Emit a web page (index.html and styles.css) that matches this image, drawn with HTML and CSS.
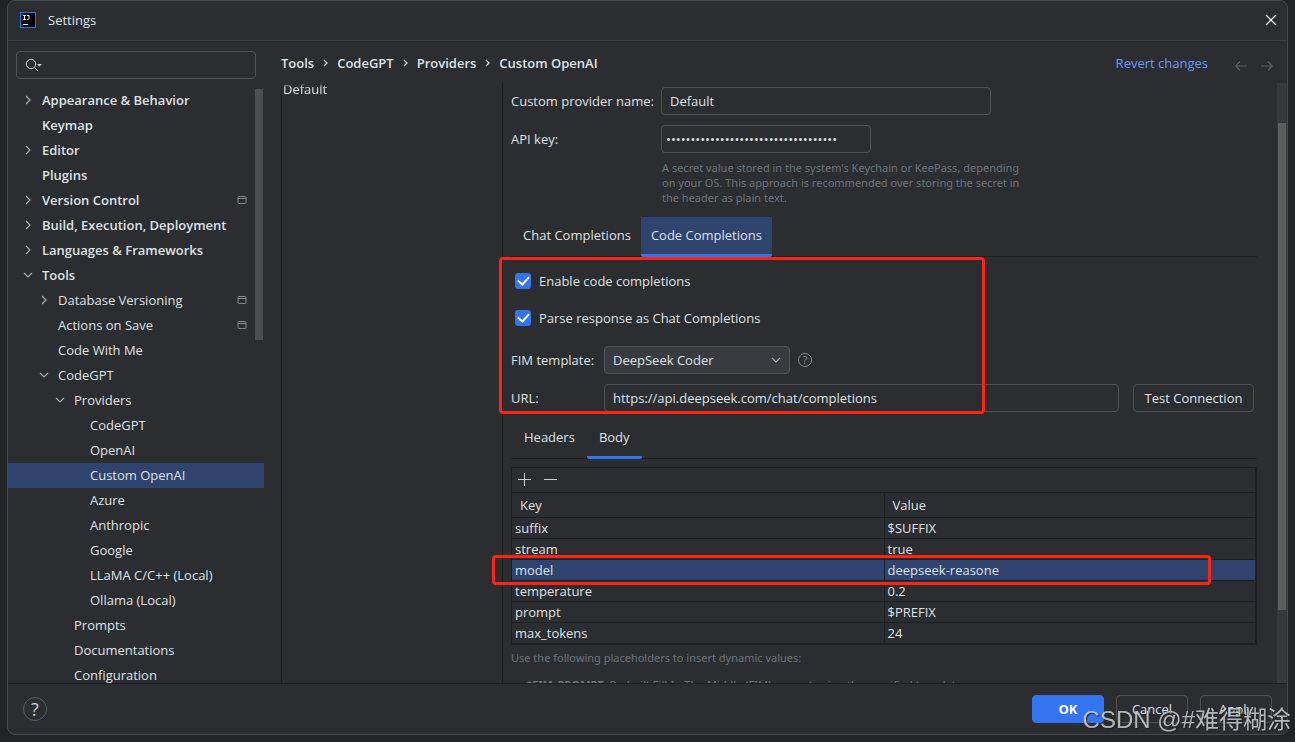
FILE: index.html
```html
<!DOCTYPE html>
<html lang="en">
<head>
<meta charset="utf-8">
<title>Settings</title>
<link rel="stylesheet" href="styles.css">
</head>
<body>
<svg class="defs" aria-hidden="true">
  <symbol id="right" viewBox="0 0 16 16"><path d="M6 4l4 4-4 4" fill="none" stroke="currentColor" stroke-width="1.2"/></symbol>
  <symbol id="down" viewBox="0 0 16 16"><path d="M4 6l4 4 4-4" fill="none" stroke="currentColor" stroke-width="1.2"/></symbol>
  <symbol id="project" viewBox="0 0 10 10"><path d="M1 3.5h8M2 1.500h6a1 1 0 0 1 1 1v5a1 1 0 0 1-1 1H2a1 1 0 0 1-1-1v-5a1 1 0 0 1 1-1z" fill="none" stroke="currentColor"/></symbol>
</svg>
<div class="dialog">
  <header class="titlebar">
    <svg class="logo" viewBox="0 0 16 16" aria-hidden="true"><rect x=".5" y=".5" width="15" height="15" fill="#000" stroke="#087cfa"/><path d="M3 3.500h3M4.500 3.500v4M3 7.500h3M7 3.500h2v3.200q0 .8-.8.8H7M3 12.500h5" fill="none" stroke="#fff"/></svg>
    <span class="title">Settings</span>
    <button class="icon-button close" aria-label="Close"><svg viewBox="0 0 12 12"><path d="M1 1l10 10M11 1L1 11" stroke="currentColor" stroke-width="1.200"/></svg></button>
  </header>

  <div class="content">
    <aside class="sidebar">
      <label class="search">
        <svg viewBox="0 0 18 14" aria-hidden="true"><circle cx="6" cy="6" r="4.700" fill="none" stroke="currentColor"/><path d="M9.400 9.400L13 13" stroke="currentColor"/><path d="M12 6h5l-2.500 2.500z" fill="currentColor"/></svg>
        <input type="text" aria-label="Search settings">
      </label>
      <nav class="tree-view" aria-label="Settings categories">
        <ul class="tree">
          <li><button class="node top"><svg class="arrow"><use href="#right"/></svg>Appearance &amp; Behavior</button></li>
          <li><button class="node top"><span class="arrow"></span>Keymap</button></li>
          <li><button class="node top"><svg class="arrow"><use href="#right"/></svg>Editor</button></li>
          <li><button class="node top"><span class="arrow"></span>Plugins</button></li>
          <li><button class="node top"><svg class="arrow"><use href="#right"/></svg>Version Control<svg class="mark"><use href="#project"/></svg></button></li>
          <li><button class="node top"><svg class="arrow"><use href="#right"/></svg>Build, Execution, Deployment</button></li>
          <li><button class="node top"><svg class="arrow"><use href="#right"/></svg>Languages &amp; Frameworks</button></li>
          <li><button class="node top" aria-expanded="true"><svg class="arrow"><use href="#down"/></svg>Tools</button>
            <ul>
              <li><button class="node level-1"><svg class="arrow"><use href="#right"/></svg>Database Versioning<svg class="mark"><use href="#project"/></svg></button></li>
              <li><button class="node level-1"><span class="arrow"></span>Actions on Save<svg class="mark"><use href="#project"/></svg></button></li>
              <li><button class="node level-1"><span class="arrow"></span>Code With Me</button></li>
              <li><button class="node level-1" aria-expanded="true"><svg class="arrow"><use href="#down"/></svg>CodeGPT</button>
                <ul>
                  <li><button class="node level-2" aria-expanded="true"><svg class="arrow"><use href="#down"/></svg>Providers</button>
                    <ul>
                      <li><button class="node level-3"><span class="arrow"></span>CodeGPT</button></li>
                      <li><button class="node level-3"><span class="arrow"></span>OpenAI</button></li>
                      <li><button class="node level-3 selected" aria-current="page"><span class="arrow"></span>Custom OpenAI</button></li>
                      <li><button class="node level-3"><span class="arrow"></span>Azure</button></li>
                      <li><button class="node level-3"><span class="arrow"></span>Anthropic</button></li>
                      <li><button class="node level-3"><span class="arrow"></span>Google</button></li>
                      <li><button class="node level-3"><span class="arrow"></span>LLaMA C/C++ (Local)</button></li>
                      <li><button class="node level-3"><span class="arrow"></span>Ollama (Local)</button></li>
                    </ul>
                  </li>
                  <li><button class="node level-2"><span class="arrow"></span>Prompts</button></li>
                  <li><button class="node level-2"><span class="arrow"></span>Documentations</button></li>
                  <li><button class="node level-2"><span class="arrow"></span>Configuration</button></li>
                </ul>
              </li>
            </ul>
          </li>
        </ul>
        <div class="tree-thumb"></div>
      </nav>
    </aside>

    <main class="main">
      <div class="path-row">
        <nav class="path" aria-label="Breadcrumb">
          <span>Tools</span><svg><path d="M1 1l3 3-3 3" fill="none" stroke="currentColor" stroke-width="1.200"/></svg>
          <span>CodeGPT</span><svg><path d="M1 1l3 3-3 3" fill="none" stroke="currentColor" stroke-width="1.200"/></svg>
          <span>Providers</span><svg><path d="M1 1l3 3-3 3" fill="none" stroke="currentColor" stroke-width="1.200"/></svg>
          <span>Custom OpenAI</span>
        </nav>
        <a class="revert" href="#">Revert changes</a>
        <div class="history">
          <button class="icon-button" aria-label="Back" disabled><svg viewBox="0 0 12 12"><path d="M12 6H1M5 1.500L.8 6 5 10.500" fill="none" stroke="currentColor" stroke-width="1.200"/></svg></button>
          <button class="icon-button" aria-label="Forward" disabled><svg viewBox="0 0 12 12"><path d="M0 6h11M7 1.500L11.200 6 7 10.500" fill="none" stroke="currentColor" stroke-width="1.200"/></svg></button>
        </div>
      </div>

      <div class="panes">
        <ul class="providers"><li>Default</li></ul>
        <section class="detail">
          <div class="form">
            <label for="name">Custom provider name:</label>
            <input class="field name" id="name" type="text" value="Default">
            <label for="key">API key:</label>
            <input class="field key" id="key" type="password" value="abcdefghijklmnopqrstuvwxyz012345678">
          </div>
          <p class="hint key-hint">A secret value stored in the system's Keychain or KeePass, depending<br>on your OS. This approach is recommended over storing the secret in<br>the header as plain text.</p>

          <div class="tabs" role="tablist">
            <button class="tab" role="tab" aria-selected="false">Chat Completions</button>
            <button class="tab active filled" role="tab" aria-selected="true">Code Completions</button>
          </div>

          <div class="checks">
            <label class="check"><input type="checkbox" checked>Enable code completions</label>
            <label class="check"><input type="checkbox" checked>Parse response as Chat Completions</label>
          </div>

          <div class="line">
            <label class="line-label" for="fim">FIM template:</label>
            <span class="combo"><select id="fim"><option>DeepSeek Coder</option></select><svg><use href="#down"/></svg></span>
            <button class="help small" aria-label="Template help">?</button>
          </div>
          <div class="line url-line">
            <label class="line-label" for="url">URL:</label>
            <input class="field url" id="url" type="text" value="https://api.deepseek.com/chat/completions">
            <button class="button test">Test Connection</button>
          </div>

          <div class="tabs sub" role="tablist">
            <button class="tab" role="tab" aria-selected="false">Headers</button>
            <button class="tab active" role="tab" aria-selected="true">Body</button>
          </div>

          <div class="grid">
            <div class="toolbar">
              <button class="icon-button" aria-label="Add"><svg viewBox="0 0 14 14"><path d="M7.500 1v13M1 7.500h13" stroke="currentColor"/></svg></button>
              <button class="icon-button" aria-label="Remove"><svg viewBox="0 0 14 14"><path d="M1 7.500h13" stroke="currentColor"/></svg></button>
            </div>
            <table>
              <thead><tr><th>Key</th><th>Value</th></tr></thead>
              <tbody>
                <tr><td>suffix</td><td>$SUFFIX</td></tr>
                <tr><td>stream</td><td>true</td></tr>
                <tr class="selected"><td>model</td><td>deepseek-reasone</td></tr>
                <tr><td>temperature</td><td>0.2</td></tr>
                <tr><td>prompt</td><td>$PREFIX</td></tr>
                <tr><td>max_tokens</td><td>24</td></tr>
              </tbody>
            </table>
          </div>
          <p class="hint">Use the following placeholders to insert dynamic values:</p>
          <ul class="hint placeholders"><li><b>$FIM_PROMPT</b>: Prebuilt Fill-In-The-Middle (FIM) prompt using the specified template.</li></ul>
        </section>
        <div class="scrollbar"><div class="thumb"></div></div>
      </div>
    </main>
  </div>

  <footer class="footer">
    <button class="help" aria-label="Help">?</button>
    <div class="actions">
      <button class="button primary">OK</button>
      <button class="button">Cancel</button>
      <button class="button">Apply</button>
    </div>
  </footer>
</div>
<div class="callout callout-options"></div>
<div class="callout callout-model"></div>
<div class="watermark">CSDN @#难得糊涂</div>
</body>
</html>
```
FILE: styles.css
```css
* { box-sizing: border-box; }

body {
  margin: 0;
  height: 100vh;
  overflow: hidden;
  padding: 0 7px 7px;
  background: #222326;
  color: #dfe1e5;
  font: 13px/18px "Open Sans", "Noto Sans", sans-serif;
}

button, input, select { font: inherit; color: inherit; }
button { background: none; border: 0; padding: 0; }
ul { list-style: none; margin: 0; padding: 0; }
p { margin: 0; }
svg { display: block; flex: none; }
.defs { display: none; }

.dialog {
  display: flex;
  flex-direction: column;
  height: 100%;
  border: 1px solid #47494c;
  border-radius: 8px;
  background: #2b2d30;
  overflow: hidden;
}

.titlebar {
  display: flex;
  align-items: center;
  height: 40px;
  flex: none;
  padding: 0 10px 2px 12px;
  border-bottom: 1px solid #3c3e41;
}
.logo { width: 16px; height: 16px; }
.title { margin-left: 12px; }
.close { margin-left: auto; color: #fff; }
.icon-button svg { width: 12px; height: 12px; }

.content { display: flex; flex: 1; min-height: 0; }

.sidebar { width: 256px; flex: none; display: flex; flex-direction: column; }
.search {
  display: flex;
  align-items: center;
  flex: none;
  height: 28px;
  margin: 10px 8px 9px;
  padding-left: 8px;
  border: 1px solid #4e5157;
  border-radius: 4px;
  color: #ced0d6;
}
.search svg { width: 18px; height: 14px; }
.search input { flex: 1; min-width: 0; border: 0; outline: 0; background: none; }

.tree-view { position: relative; flex: 1; min-height: 0; overflow: hidden; }
.node {
  display: flex;
  align-items: center;
  width: 100%;
  height: 25px;
  padding: 0 0 1px 12px;
  text-align: left;
}
.top { font-weight: 600; }
.level-1 { padding-left: 28px; }
.level-2 { padding-left: 44px; }
.level-3 { padding-left: 60px; }
.node.selected { background: #2e436e; }
.arrow { width: 16px; height: 16px; margin-right: 6px; flex: none; color: #a8abb2; }
.mark { width: 10px; height: 10px; margin-left: auto; margin-right: 17px; color: #868a91; }
.tree-thumb {
  position: absolute;
  top: 1px;
  right: 1px;
  width: 8px;
  height: 251px;
  background: #4d4e51;
}

.main { flex: 1; min-width: 0; display: flex; flex-direction: column; padding-left: 17px; }
.path-row { display: flex; align-items: center; height: 42px; flex: none; padding: 2px 14px 0 0; }
.path { display: flex; align-items: center; gap: 9px; font-weight: 600; }
.path svg { width: 5px; height: 8px; }
.revert { margin-left: auto; color: #6b9bfa; text-decoration: none; }
.history { display: flex; gap: 14px; margin-left: 27px; padding-top: 5px; color: #5a5d63; }

.panes { display: flex; flex: 1; min-height: 0; }
.providers {
  width: 221px;
  flex: none;
  overflow: hidden;
  border-left: 1px solid #1e1f22;
  padding-left: 1px;
  line-height: 12px;
  mask-image: linear-gradient(transparent, #000 5px);
}
.detail {
  flex: 1;
  min-width: 0;
  overflow: hidden;
  border-left: 1px solid #1e1f22;
  padding: 4px 20px 0 8px;
}
.scrollbar { width: 10px; flex: none; padding: 40px 1px 0; background: #37383b; }
.thumb { height: 87%; max-height: 487px; background: #5c5d5f; }

.form { display: grid; grid-template-columns: 150px 1fr; gap: 10px 0; align-items: center; }
.field {
  height: 28px;
  border: 1px solid #4e5157;
  border-radius: 4px;
  background: transparent;
  padding: 0 8px 1px;
  outline: 0;
}
.name { width: 330px; }
.key { width: 210px; padding: 0 4px; }
.hint { font-family: "Noto Sans", sans-serif; font-size: 11px; line-height: 15px; color: #6f737a; }
.key-hint { margin: 7px 0 12px 151px; }

.tabs { display: flex; height: 40px; padding-left: 2px; border-bottom: 1px solid #1e1f22; }
.tab { height: 40px; padding: 0 10px 1px; border-bottom: 3px solid transparent; }
.tab.active { border-bottom-color: #3574f0; border-radius: 0 0 2px 2px; }
.tab.filled { background: #2e436e; }
.sub { margin-top: 7px; padding-left: 1px; }
.sub .tab { padding: 0 12px 1px; }

.checks { display: flex; flex-direction: column; gap: 21px; padding: 16px 0 20px 4px; }
.check { display: flex; align-items: center; gap: 8px; height: 16px; }
.check input {
  appearance: none;
  width: 16px;
  height: 16px;
  margin: 0;
  border-radius: 3px;
  background: #3574f0;
  display: grid;
  place-items: center;
}
.check input:checked::after {
  content: "";
  width: 5px;
  height: 9px;
  margin-bottom: 3px;
  border: solid #fff;
  border-width: 0 2px 2px 0;
  transform: rotate(42deg);
}

.line { display: flex; align-items: center; }
.line-label { width: 93px; flex: none; }
.combo { position: relative; display: block; width: 186px; height: 28px; margin-right: 8px; }
.combo select {
  appearance: none;
  width: 100%;
  height: 28px;
  padding: 0 8px;
  border: 1px solid #4e5157;
  border-radius: 4px;
  background: #393b40;
  outline: 0;
}
.combo svg { position: absolute; right: 6px; top: 6px; width: 16px; height: 16px; color: #a8abb2; pointer-events: none; }
.help {
  width: 24px;
  height: 24px;
  border: 1px solid #5a5d63;
  border-radius: 50%;
  font-size: 18px;
  line-height: 22px;
  color: #ced0d6;
}
.help.small { width: 14px; height: 14px; font-size: 11px; line-height: 12px; color: #868a91; border-color: #868a91; }
.url-line { margin-top: 10px; padding-right: 3px; }
.url { flex: 1; min-width: 0; }
.button {
  height: 28px;
  width: 72px;
  border: 1px solid #4e5157;
  border-radius: 4px;
}
.test { width: 121px; margin-left: 14px; }
.primary { background: #3574f0; border-color: #3574f0; font-weight: 700; color: #fff; }

.grid { margin: 8px 0 5px; border: 1px solid #1e1f22; border-width: 1px 2px 2px 1px; }
.toolbar { display: flex; align-items: center; gap: 12px; height: 24px; padding: 0 0 2px 5px; color: #ced0d6; }
.toolbar svg { width: 14px; height: 14px; }
table { width: 100%; border-collapse: separate; border-spacing: 0; table-layout: fixed; }
th {
  height: 26px;
  padding: 0 8px;
  border-top: 1px solid #1e1f22;
  border-bottom: 1px solid #1e1f22;
  text-align: left;
  font-weight: 400;
}
td { height: 21px; padding: 0 3px; border-bottom: 1px solid #1e1f22; }
tbody tr:last-child td { height: 20px; border-bottom: 0; }
th + th, td + td { border-left: 1px solid #1e1f22; }
tr.selected { background: #2e436e; }
.placeholders { margin-top: 12px; padding-left: 15px; white-space: nowrap; }

.footer {
  display: flex;
  align-items: center;
  justify-content: space-between;
  height: 51px;
  flex: none;
  padding: 0 15px;
  border-top: 1px solid #1e1f22;
}
.actions { display: flex; gap: 12px; }

/* Annotations drawn over the dialog */
.callout { position: absolute; border: 3px solid #fb2416; border-radius: 4px; pointer-events: none; }
.callout-options { left: 499px; top: 257px; width: 486px; height: 157px; }
.callout-model { left: 492px; top: 555px; width: 719px; height: 30px; }
.watermark {
  position: absolute;
  right: 4px;
  bottom: 4px;
  font: 24px/36px "Liberation Sans", "Noto Sans CJK SC", sans-serif;
  color: #c4c5c7;
  opacity: .9;
  text-shadow: 1px 1px 1px #222;
  white-space: nowrap;
}
```
